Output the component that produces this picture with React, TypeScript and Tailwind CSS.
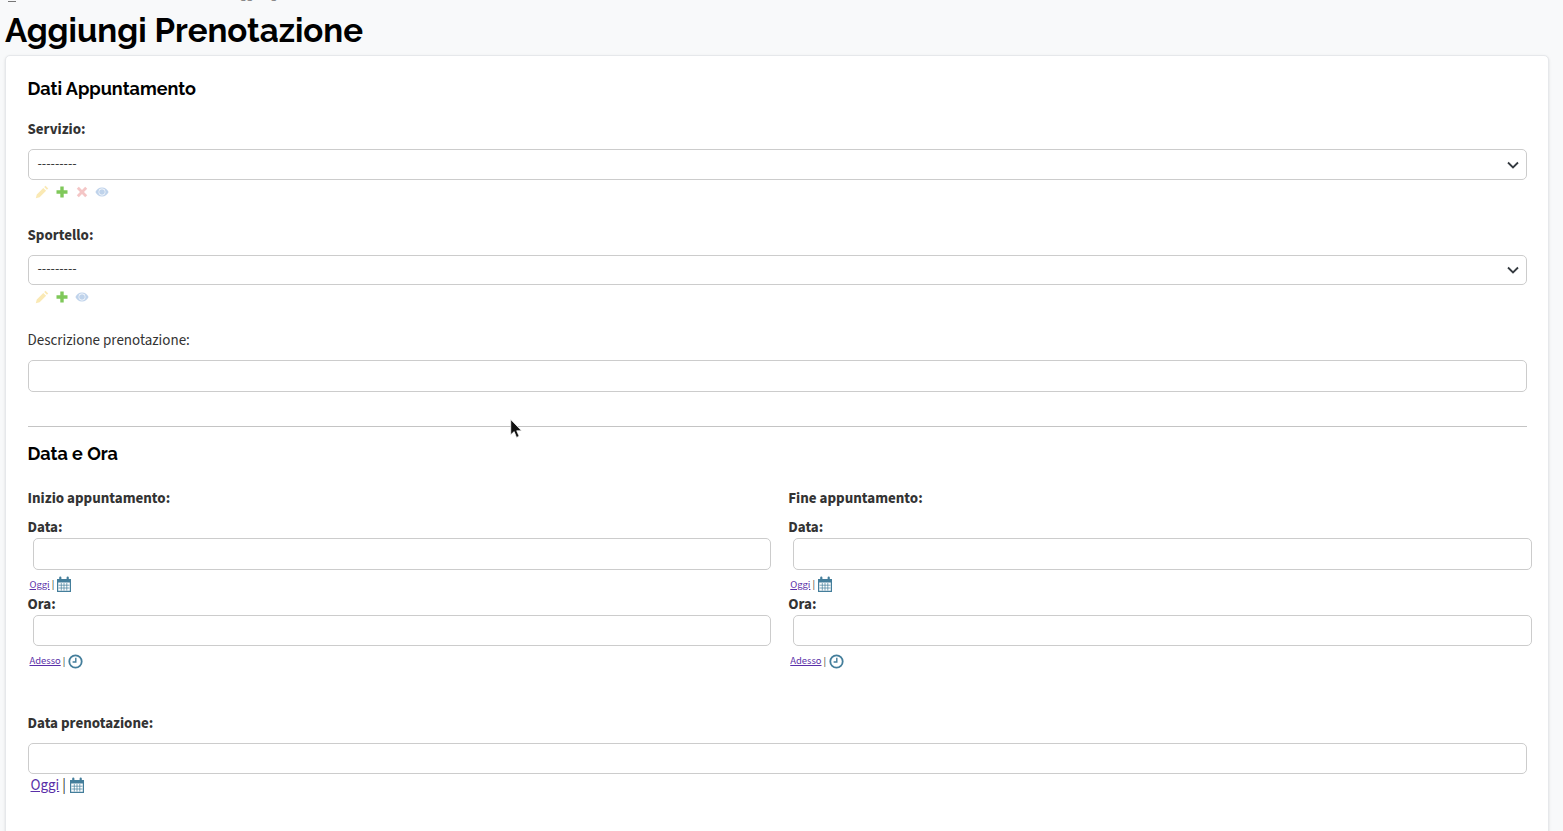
import React from 'react';

const headingFont = "font-['Raleway','Inter','Liberation_Sans',sans-serif]";
const linkCls = 'text-[#5a2fa8] underline';

const Pencil = () => (
    <svg width="14" height="14" viewBox="0 0 14 14" className="opacity-30">
        <path d="M10.500.800l2.700 2.700-1.300 1.300-2.700-2.700zM8.300 2.900l2.800 2.800-6.500 6.500-3.800 1 1-3.800z" fill="#efb80b" />
    </svg>
);

const Plus = () => (
    <svg width="12" height="12" viewBox="0 0 12 12">
        <path d="M4.300.500h3.400v3.800h3.800v3.400H7.700v3.800H4.300V7.700H.500V4.300h3.800z" fill="#7fc85a" />
    </svg>
);

const Cross = () => (
    <svg width="12" height="12" viewBox="0 0 12 12" className="opacity-30">
        <path d="M2.800.800L6 4l3.200-3.200 2 2L8 6l3.200 3.200-2 2L6 8l-3.200 3.200-2-2L4 6 .800 2.800z" fill="#dd4646" />
    </svg>
);

const Eye = () => (
    <svg width="14" height="12" viewBox="0 0 14 12" className="opacity-30">
        <path fillRule="evenodd" d="M7 1.500c3 0 5.400 2 6.600 4.500C12.400 8.500 10 10.500 7 10.500S1.600 8.500.4 6C1.600 3.500 4 1.500 7 1.500zM7 2.600a3.400 3.400 0 100 6.800 3.400 3.400 0 000-6.800z" fill="#2f6fbf" />
        <circle cx="7" cy="6" r="2.800" fill="#2f6fbf" />
    </svg>
);

const Calendar = () => (
    <svg width="16" height="17" viewBox="0 0 16 17">
        <path fillRule="evenodd" d="M1 3h2.200V1.500a1.100 1.100 0 012.200 0V3h5.200V1.500a1.100 1.100 0 012.200 0V3H15v13H1zM2.200 6.500v8.300h11.600V6.500z" fill="#447e9b" />
        <path d="M2.500 9.200h11M2.500 12h11M5.300 7v7.500M8 7v7.500M10.800 7v7.500" stroke="#447e9b" strokeWidth="0.700" />
    </svg>
);

const Clock = () => (
    <svg width="15" height="15" viewBox="0 0 15 15">
        <circle cx="7.500" cy="7.500" r="6.200" fill="none" stroke="#447e9b" strokeWidth="1.800" />
        <path d="M7.800 3.800v4.200H4.600" fill="none" stroke="#447e9b" strokeWidth="1.400" />
    </svg>
);

const SelectField = ({ label, height, children }: { label: string; height: string; children: React.ReactNode }) => (
    <div>
        <label className="block h-[20px] leading-[22px] font-bold text-[#333]">{label}</label>
        <div className={`mt-[10px] flex items-center justify-between rounded-[5px] border border-[#ccc] bg-white pl-[9px] pr-[7px] ${height}`}>
            <span className="text-[14px] text-[#333]">---------</span>
            <svg width="12" height="8" viewBox="0 0 12 8">
                <path d="M1 1.500l5 5 5-5" fill="none" stroke="#343a40" strokeWidth="1.800" />
            </svg>
        </div>
        <div className="mt-[5px] flex h-[14px] items-center gap-[7px] pl-[7px]">{children}</div>
    </div>
);

const DateTimeColumn = ({ title }: { title: string }) => (
    <div className="pr-[17px]">
        <div className="h-[20px] leading-[22px] font-bold text-[#333]">{title}</div>
        <div className="mt-[9px] h-[20px] leading-[22px] font-bold text-[#333]">Data:</div>
        <div className="ml-[5px] mt-[1px] h-[32px] rounded-[5px] border border-[#ccc] bg-white"></div>
        <div className="mt-[7px] flex h-[15px] items-center pl-[2px] text-[10.5px] text-[#333]">
            <a className={linkCls}>Oggi</a>
            <span className="mx-[2px]">|</span>
            <Calendar />
        </div>
        <div className="mt-[2px] h-[20px] leading-[22px] font-bold text-[#333]">Ora:</div>
        <div className="ml-[5px] mt-[1px] h-[31px] rounded-[5px] border border-[#ccc] bg-white"></div>
        <div className="mt-[8px] flex h-[15px] items-center pl-[2px] text-[10.5px] text-[#333]">
            <a className={`${linkCls} -mt-[2px]`}>Adesso</a>
            <span className="mx-[2px]">|</span>
            <span className="ml-[1px]"><Clock /></span>
        </div>
    </div>
);

const App = () => {
    return (
        <div className="relative h-[831px] overflow-hidden bg-[#f8f9fa] text-[15px] font-['Source_Sans_Pro','Source_Sans_3','Lato','Liberation_Sans',sans-serif]">
            {/* Breadcrumb, cut off by the top of the window */}
            <div className="flex h-[2px] items-end overflow-hidden text-[#777]">
                <span className="ml-[8px] h-[1px] w-[8px] bg-[#777]"></span>
                <span className="ml-[217px] mb-[-1px] h-[18px] text-[13px] leading-[18px]">Aggiungi</span>
            </div>

            {/* Page title */}
            <div className="h-[53px] pl-[5px] pt-[7px]">
                <h1 className={`${headingFont} text-[33px] leading-[44px] font-bold text-black`}>Aggiungi Prenotazione</h1>
            </div>

            {/* Card */}
            <div className="ml-[5px] mr-[14px] h-[800px] rounded-[5px] border border-[#e6e8eb] bg-white pl-[21.5px] pr-[21px] pt-[21px] shadow-sm">
                <h2 className={`${headingFont} h-[24px] text-[18px] leading-[24px] font-bold text-black`}>Dati Appuntamento</h2>

                <div className="mt-[18px]">
                    <SelectField label="Servizio:" height="h-[31px]">
                        <Pencil />
                        <Plus />
                        <span className="ml-[1px]"><Cross /></span>
                        <Eye />
                    </SelectField>
                </div>

                <div className="mt-[26px]">
                    <SelectField label="Sportello:" height="h-[30px] pb-[1px]">
                        <Pencil />
                        <Plus />
                        <Eye />
                    </SelectField>
                </div>

                <div className="mt-[26px]">
                    <label className="block h-[20px] leading-[22px] text-[#333]">Descrizione prenotazione:</label>
                    <div className="mt-[10px] h-[32px] rounded-[5px] border border-[#ccc] bg-white"></div>
                </div>

                <hr className="mt-[34px] border-t border-[#c4c4c4]" />

                <h2 className={`${headingFont} mt-[15px] h-[24px] text-[18px] leading-[24px] font-bold text-black`}>Data e Ora</h2>

                <div className="-mr-[22px] mt-[22px] grid grid-cols-2">
                    <DateTimeColumn title="Inizio appuntamento:" />
                    <DateTimeColumn title="Fine appuntamento:" />
                </div>

                <div className="mt-[44px]">
                    <label className="block h-[20px] leading-[22px] font-bold text-[#333]">Data prenotazione:</label>
                    <div className="mt-[10px] h-[31px] rounded-[5px] border border-[#ccc] bg-white"></div>
                    <div className="mt-[1px] flex h-[20px] items-center pl-[3px] text-[15px] text-[#333]">
                        <a className={`${linkCls} mt-[2px]`}>Oggi</a>
                        <span className="mx-[3px] mt-[2px]">|</span>
                        <Calendar />
                    </div>
                </div>
            </div>

            {/* Mouse pointer */}
            <svg width="13" height="21" viewBox="0 0 12 20" className="absolute left-[510px] top-[419px]">
                <path d="M.5.500v14.500l3.300-3 2.200 5.500 2.500-1-2.300-5.300h4.600z" fill="#111" stroke="#fff" strokeWidth="0.700" />
            </svg>
        </div>
    );
};

export default App;
